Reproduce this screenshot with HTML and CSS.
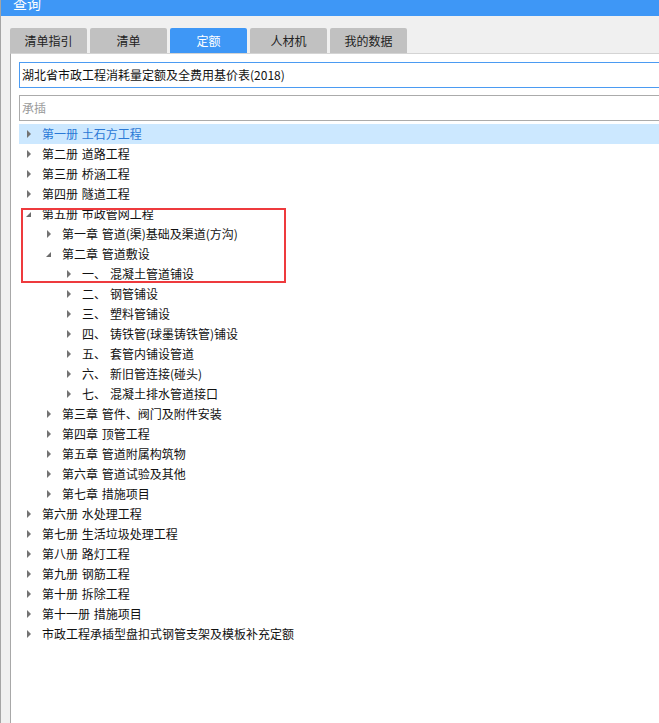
FILE: index.html
```html
<!DOCTYPE html>
<html lang="zh">
<head>
<meta charset="utf-8">
<title>查询</title>
<link rel="stylesheet" href="styles.css">
</head>
<body>
<div class="window">
  <div class="titlebar"><span class="title">查询</span></div>
  <div class="tabs">
    <div class="tab">清单指引</div>
    <div class="tab">清单</div>
    <div class="tab active">定额</div>
    <div class="tab">人材机</div>
    <div class="tab">我的数据</div>
  </div>
  <div class="panel">
    <div class="field field-select">湖北省市政工程消耗量定额及全费用基价表(2018)</div>
    <div class="field field-search"><span class="placeholder">承插</span></div>
    <ul class="tree">
      <li class="row l0 selected"><i class="tri closed"></i>第一册 土石方工程</li>
      <li class="row l0"><i class="tri closed"></i>第二册 道路工程</li>
      <li class="row l0"><i class="tri closed"></i>第三册 桥涵工程</li>
      <li class="row l0"><i class="tri closed"></i>第四册 隧道工程</li>
      <li class="row l0"><i class="tri open"></i>第五册 市政管网工程</li>
      <li class="row l1"><i class="tri closed"></i>第一章 管道(渠)基础及渠道(方沟)</li>
      <li class="row l1"><i class="tri open"></i>第二章 管道敷设</li>
      <li class="row l2"><i class="tri closed"></i><span class="num">一、</span>混凝土管道铺设</li>
      <li class="row l2"><i class="tri closed"></i><span class="num">二、</span>钢管铺设</li>
      <li class="row l2"><i class="tri closed"></i><span class="num">三、</span>塑料管铺设</li>
      <li class="row l2"><i class="tri closed"></i><span class="num">四、</span>铸铁管(球墨铸铁管)铺设</li>
      <li class="row l2"><i class="tri closed"></i><span class="num">五、</span>套管内铺设管道</li>
      <li class="row l2"><i class="tri closed"></i><span class="num">六、</span>新旧管连接(碰头)</li>
      <li class="row l2"><i class="tri closed"></i><span class="num">七、</span>混凝土排水管道接口</li>
      <li class="row l1"><i class="tri closed"></i>第三章 管件、阀门及附件安装</li>
      <li class="row l1"><i class="tri closed"></i>第四章 顶管工程</li>
      <li class="row l1"><i class="tri closed"></i>第五章 管道附属构筑物</li>
      <li class="row l1"><i class="tri closed"></i>第六章 管道试验及其他</li>
      <li class="row l1"><i class="tri closed"></i>第七章 措施项目</li>
      <li class="row l0"><i class="tri closed"></i>第六册 水处理工程</li>
      <li class="row l0"><i class="tri closed"></i>第七册 生活垃圾处理工程</li>
      <li class="row l0"><i class="tri closed"></i>第八册 路灯工程</li>
      <li class="row l0"><i class="tri closed"></i>第九册 钢筋工程</li>
      <li class="row l0"><i class="tri closed"></i>第十册 拆除工程</li>
      <li class="row l0"><i class="tri closed"></i>第十一册 措施项目</li>
      <li class="row l0"><i class="tri closed"></i>市政工程承插型盘扣式钢管支架及模板补充定额</li>
    </ul>
    <div class="highlight"></div>
  </div>
</div>
</body>
</html>
```

FILE: styles.css
```css
html, body {
  margin: 0;
  padding: 0;
  width: 659px;
  height: 723px;
  overflow: hidden;
  background: #f0f0f0;
  font-family: "Noto Sans CJK SC", "Microsoft YaHei", sans-serif;
  font-size: 12px;
  color: #111111;
}

.window {
  height: 723px;
  border-left: 1px solid #a5a5a5;
  display: flex;
  flex-direction: column;
  box-sizing: border-box;
}

.titlebar {
  height: 16px;
  background: #3e97f6;
  overflow: hidden;
  flex: none;
}

.title {
  display: block;
  margin-top: -7px;
  margin-left: 12px;
  font-size: 14px;
  line-height: 20px;
  color: #ffffff;
}

.tabs {
  display: flex;
  gap: 3px;
  padding: 12px 0 0 9px;
  flex: none;
}

.tab {
  width: 77px;
  height: 25px;
  line-height: 25px;
  text-align: center;
  background: #c1c1c1;
  color: #222222;
  border-radius: 2px 2px 0 0;
}

.tab.active {
  background: #3e97f6;
  color: #ffffff;
}

.panel {
  position: relative;
  flex: 1;
  margin-left: 9px;
  background: #ffffff;
  border-left: 1px solid #a8a8a8;
  border-top: 1px solid #d4d4d4;
  padding: 8px 0 0 8px;
}

.field {
  height: 24px;
  line-height: 24px;
  padding-left: 2px;
  border: 1px solid #ababab;
  border-right: none;
  white-space: nowrap;
}

.field-select {
  border-color: #4b9bf2;
  color: #111111;
  margin-bottom: 7px;
}

.field-search {
  margin-bottom: 3px;
}

.placeholder {
  color: #9a9a9a;
}

.tree {
  list-style: none;
  margin: 0;
  padding: 0;
}

.row {
  height: 20px;
  line-height: 20px;
  white-space: nowrap;
  display: flex;
  align-items: center;
  word-spacing: 1px;
}

.row.selected {
  background: #cce8ff;
  color: #2a79d6;
}

.l0 { padding-left: 7px; }
.l1 { padding-left: 27px; }
.l2 { padding-left: 47px; }

.tri {
  display: inline-block;
  width: 16px;
  height: 20px;
  position: relative;
  flex: none;
}

.tri.closed::before {
  content: "";
  position: absolute;
  left: 1px;
  top: 6px;
  border-left: 4px solid #737373;
  border-top: 4px solid transparent;
  border-bottom: 4px solid transparent;
}

.tri.open::before {
  content: "";
  position: absolute;
  left: 0;
  top: 8px;
  border-right: 5px solid #6c6c6c;
  border-top: 5px solid transparent;
}

.num {
  display: inline-block;
  width: 28px;
}

.highlight {
  position: absolute;
  left: 10px;
  top: 154px;
  width: 261px;
  height: 71px;
  border: 2px solid #ee3a3d;
  pointer-events: none;
}
```
